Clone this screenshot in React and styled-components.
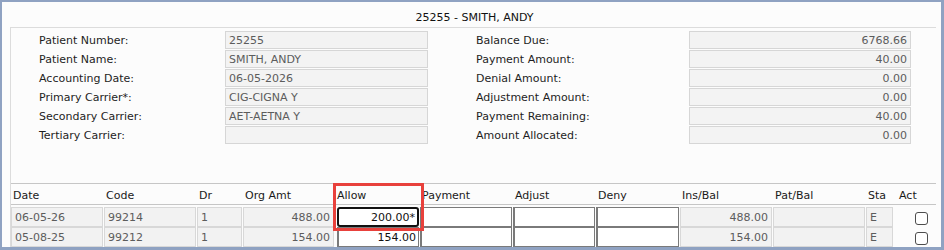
import React from 'react';
import styled, { createGlobalStyle } from 'styled-components';

const GlobalStyle = createGlobalStyle`
    html, body {
        margin: 0;
        padding: 0;
        background: #ffffff;
    }
`;

const summaryLeft = [
    { label: "Patient Number:", value: "25255" },
    { label: "Patient Name:", value: "SMITH, ANDY" },
    { label: "Accounting Date:", value: "06-05-2026" },
    { label: "Primary Carrier*:", value: "CIG-CIGNA Y" },
    { label: "Secondary Carrier:", value: "AET-AETNA Y" },
    { label: "Tertiary Carrier:", value: "" },
];

const summaryRight = [
    { label: "Balance Due:", value: "6768.66" },
    { label: "Payment Amount:", value: "40.00" },
    { label: "Denial Amount:", value: "0.00" },
    { label: "Adjustment Amount:", value: "0.00" },
    { label: "Payment Remaining:", value: "40.00" },
    { label: "Amount Allocated:", value: "0.00" },
];

const headers = ["Date", "Code", "Dr", "Org Amt", "Allow", "Payment", "Adjust", "Deny", "Ins/Bal", "Pat/Bal", "Sta", "Act"];

const lines = [
    { date: "06-05-26", code: "99214", dr: "1", org: "488.00", allow: "200.00*", focused: true, ins: "488.00", sta: "E" },
    { date: "05-08-25", code: "99212", dr: "1", org: "154.00", allow: "154.00", focused: false, ins: "154.00", sta: "E" },
];

function App() {
    return (
        <>
            <GlobalStyle />
            <Frame>
                <Title>25255 - SMITH, ANDY</Title>
                <Panel>
                    <Summary>
                        <FieldColumn $label={186} $value={203}>
                            {summaryLeft.map((f) => (
                                <React.Fragment key={f.label}>
                                    <FieldLabel>{f.label}</FieldLabel>
                                    <FieldValue>{f.value}</FieldValue>
                                </React.Fragment>
                            ))}
                        </FieldColumn>
                        <FieldColumn $label={213} $value={222}>
                            {summaryRight.map((f) => (
                                <React.Fragment key={f.label}>
                                    <FieldLabel>{f.label}</FieldLabel>
                                    <FieldValue $right>{f.value}</FieldValue>
                                </React.Fragment>
                            ))}
                        </FieldColumn>
                    </Summary>

                    <Table>
                        <HeaderRow>
                            {headers.map((h) => (
                                <HeaderCell key={h} $pad={h === "Act" ? 4 : 2}>{h}</HeaderCell>
                            ))}
                        </HeaderRow>
                        <Body>
                            {lines.map((l) => (
                                <Row key={l.date}>
                                    <ReadCell>{l.date}</ReadCell>
                                    <ReadCell>{l.code}</ReadCell>
                                    <ReadCell>{l.dr}</ReadCell>
                                    <ReadCell $right>{l.org}</ReadCell>
                                    <EditCell $right $focused={l.focused} $shift={2}>{l.allow}</EditCell>
                                    <EditCell />
                                    <EditCell />
                                    <EditCell />
                                    <ReadCell $right>{l.ins}</ReadCell>
                                    <ReadCell />
                                    <ReadCell $trim={2}>{l.sta}</ReadCell>
                                    <CheckSlot>
                                        <CheckBox />
                                    </CheckSlot>
                                </Row>
                            ))}
                        </Body>
                        <Highlight />
                    </Table>
                </Panel>
            </Frame>
        </>
    );
}

const Frame = styled.div`
    width: 944px;
    height: 250px;
    box-sizing: border-box;
    border: 2px solid #8fa2c2;
    border-right-width: 3px;
    border-bottom-width: 3px;
    background: #fcfcfc;
    overflow: hidden;
    display: flex;
    flex-direction: column;
    font-family: "DejaVu Sans", Verdana, sans-serif;
    font-size: 11px;
    color: #1e1e1e;
`;

const Title = styled.div`
    height: 25px;
    box-sizing: border-box;
    padding: 9px 0 0 6px;
    line-height: 13px;
    text-align: center;
    color: #111;
`;

const Panel = styled.div`
    flex: 1;
    margin: 0 5px 0 8px;
    border-top: 1px solid #dcdcdc;
    border-left: 1px solid #dcdcdc;
    display: flex;
    flex-direction: column;
`;

const Summary = styled.div`
    height: 155px;
    box-sizing: border-box;
    padding: 3px 0 0 28px;
    display: flex;
    gap: 48px;
`;

const FieldColumn = styled.div`
    display: grid;
    grid-template-columns: ${(p) => p.$label}px ${(p) => p.$value}px;
    grid-auto-rows: 18px;
    row-gap: 1px;
    align-content: start;
`;

const FieldLabel = styled.div`
    padding-top: 1px;
    line-height: 18px;
    white-space: nowrap;
`;

const FieldValue = styled.div`
    box-sizing: border-box;
    height: 18px;
    border: 1px solid #d6d6d6;
    background: #f3f3f3;
    color: #5c5c5c;
    padding: 1px 3px 0;
    line-height: 15px;
    text-align: ${(p) => (p.$right ? "right" : "left")};
    white-space: nowrap;
`;

const columns = "93px 93px 46px 92px 85px 93px 83px 84px 93px 93px 29px 40px";

const Table = styled.div`
    position: relative;
    border-top: 1px solid #c6c6c6;
`;

const HeaderRow = styled.div`
    display: grid;
    grid-template-columns: ${columns};
    height: 20px;
    border-bottom: 1px solid #c6c6c6;
    align-items: center;
`;

const HeaderCell = styled.div`
    padding-left: ${(p) => p.$pad}px;
    line-height: 13px;
    padding-top: 2px;
    color: #1a1a1a;
    white-space: nowrap;
`;

const Body = styled.div`
    padding-top: 2px;
`;

const Row = styled.div`
    display: grid;
    grid-template-columns: ${columns};
    height: 20px;
`;

const ReadCell = styled.div`
    box-sizing: border-box;
    height: 20px;
    margin-right: ${(p) => p.$trim || 1}px;
    border: 1px solid #d8d8d8;
    background: #f2f2f2;
    color: #5c5c5c;
    padding: 1px 3px 0;
    line-height: 17px;
    text-align: ${(p) => (p.$right ? "right" : "left")};
    white-space: nowrap;
    overflow: hidden;
`;

const EditCell = styled.div`
    box-sizing: border-box;
    height: 20px;
    margin: 0 1px 0 ${(p) => p.$shift || 0}px;
    background: #ffffff;
    color: #111;
    padding: 1px 2px 0;
    text-align: ${(p) => (p.$right ? "right" : "left")};
    white-space: nowrap;
    border: ${(p) => (p.$focused ? "2px solid #111" : "1px solid #7a7a7a")};
    border-left-width: 2px;
    border-radius: ${(p) => (p.$focused ? "3px" : "0")};
    line-height: ${(p) => (p.$focused ? "15px" : "17px")};
`;

const CheckSlot = styled.div`
    display: flex;
    align-items: center;
    padding-left: 20px;
    padding-top: 2px;
`;

const CheckBox = styled.span`
    display: block;
    width: 13px;
    height: 13px;
    box-sizing: border-box;
    border: 1px solid #4d4d4d;
    border-radius: 3px;
    background: #fff;
`;

const Highlight = styled.div`
    position: absolute;
    top: -1px;
    left: 322px;
    width: 91px;
    height: 48px;
    box-sizing: border-box;
    border: 3px solid #e8413c;
    pointer-events: none;
`;

export default App
